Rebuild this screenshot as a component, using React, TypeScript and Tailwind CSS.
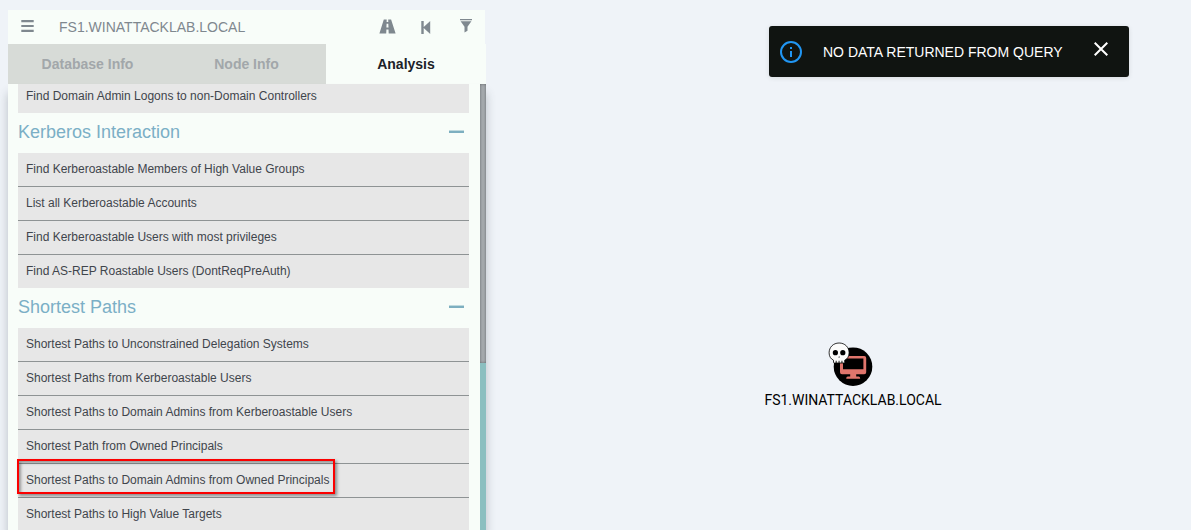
import React from "react";

const kerberos = [
  "Find Kerberoastable Members of High Value Groups",
  "List all Kerberoastable Accounts",
  "Find Kerberoastable Users with most privileges",
  "Find AS-REP Roastable Users (DontReqPreAuth)",
];

const shortest = [
  "Shortest Paths to Unconstrained Delegation Systems",
  "Shortest Paths from Kerberoastable Users",
  "Shortest Paths to Domain Admins from Kerberoastable Users",
  "Shortest Path from Owned Principals",
  "Shortest Paths to Domain Admins from Owned Principals",
  "Shortest Paths to High Value Targets",
];

const HIGHLIGHTED = "Shortest Paths to Domain Admins from Owned Principals";

function Section({ title, queries }: { title: string; queries: string[] }) {
  return (
    <section>
      <div className="flex h-10 items-start justify-between pr-[5px]">
        <h2 className="pt-[5px] text-[18px] leading-7 text-[#7bafc6]">{title}</h2>
        <span className="mt-[17px] h-[3px] w-[15px] border-t border-[#c0dade] bg-[#7dafc0]" />
      </div>
      <ul>
        {queries.map((q) => (
          <li
            key={q}
            className="relative h-[34px] border-b border-[#8e9394] bg-[#e7e7e7] pl-2 text-[12px] leading-[32px] text-[#3f454c] last:h-[34px] last:border-b-0"
          >
            {q}
            {q === HIGHLIGHTED && (
              <span className="absolute -top-[5px] -left-px h-[35px] w-[318px] border-2 border-[#fb0000] shadow-[2px_2px_3px_rgba(0,0,0,0.4),inset_2px_2px_3px_rgba(0,0,0,0.35)]" />
            )}
          </li>
        ))}
      </ul>
    </section>
  );
}

function Header() {
  return (
    <header className="flex h-[34px] w-[477px] shrink-0 items-center bg-[#f8fdf9] text-[#7f888f]">
      <svg className="-mt-[2px] ml-[13px] h-[12px] w-[13px]" viewBox="0 0 13 12" fill="currentColor">
        <path d="M0.3 0h12.4v2.2H0.3zM0.3 4.9h12.4v2.2H0.3zM0.3 9.8h12.4V12H0.3z" />
      </svg>
      <span className="ml-[25px] w-[320px] text-[14px] leading-5">FS1.WINATTACKLAB.LOCAL</span>
      <svg className="-mt-px h-[15px] w-[17px]" viewBox="0 0 17 15" fill="currentColor">
        <path d="M4.8 0.5H7.7L7.6 3H9.3L9.2 0.5H12.1L16.6 14.5H9.7L9.5 10.5H7.4L7.2 14.5H0.4ZM7.6 4.7L7.4 8.5H9.5L9.3 4.7Z" />
      </svg>
      <svg className="ml-[25px] h-[13px] w-[10px]" viewBox="0 0 10 13" fill="currentColor">
        <path d="M0.3 0H2.7V5.9L9.2 0V13L2.7 7V13H0.3Z" />
      </svg>
      <svg className="-mt-[2px] ml-[29px] h-[14px] w-[12px]" viewBox="0 0 12 14" fill="currentColor">
        <path d="M0 0H12V1.3H0ZM0.6 2.3H11.4L7.5 7.7V11.7L4.5 13.6V7.7Z" />
      </svg>
    </header>
  );
}

function Panel() {
  return (
    <aside className="flex h-full w-[478px] flex-col">
      <Header />
      <nav className="flex h-10 shrink-0 bg-[#f8fdf9] text-center text-[14px] leading-10 font-bold text-[#a2a7aa]">
        <div className="w-[159px] bg-[#d7dbd7]">Database Info</div>
        <div className="w-[159px] bg-[#d7dbd7]">Node Info</div>
        <div className="w-[160px] text-[#1c2228]">Analysis</div>
      </nav>
      <div className="flex min-h-0 flex-1 justify-between bg-[#f8fdf9] shadow-[0_9px_9px_rgba(60,70,80,0.3)]">
        <div className="w-[461px] overflow-hidden pl-[10px]">
          <div className="h-[29px] bg-[#e7e7e7] pl-2 text-[12px] leading-6 text-[#3f454c]">
            Find Domain Admin Logons to non-Domain Controllers
          </div>
          <div className="h-[175px] overflow-hidden">
            <Section title="Kerberos Interaction" queries={kerberos} />
          </div>
          <Section title="Shortest Paths" queries={shortest} />
        </div>
        <div className="flex w-[6px] flex-col">
          <div className="h-[279px] bg-[#a5aaae] shadow-[inset_0_0_3px_rgba(0,0,0,0.4)]" />
          <div className="flex-1 bg-[#8bbfc0]" />
        </div>
      </div>
    </aside>
  );
}

function Toast() {
  return (
    <div className="absolute top-[26px] left-[769px] flex h-[51px] w-[360px] items-center rounded-[3px] bg-[#101411] text-white shadow-[0_1px_5px_rgba(0,0,0,0.1)]">
      <svg className="ml-[11px] h-[22px] w-[22px]" viewBox="0 0 22 22" fill="none" stroke="#2196f3" strokeWidth="2">
        <circle cx="11" cy="11" r="10" />
        <path d="M11 10v6M11 6v2" />
      </svg>
      <span className="ml-[21px] w-[271px] text-[14px] leading-5 whitespace-nowrap">NO DATA RETURNED FROM QUERY</span>
      <svg className="-mt-[6px] h-[14px] w-[14px]" viewBox="0 0 14 14" fill="none" stroke="white" strokeWidth="2">
        <path d="M0.7 0.7l12.6 12.6M13.3 0.7L0.7 13.3" />
      </svg>
    </div>
  );
}

function ComputerNode() {
  return (
    <div className="absolute top-[342px] left-[753px] flex w-[200px] flex-col items-center">
      <svg className="h-[46px] w-[50px]" viewBox="0 0 50 46">
        <circle cx="25" cy="24.7" r="19.3" fill="#000" />
        <path
          fill="#e0756c"
          fillRule="evenodd"
          d="M14 13.9H36.2Q38.2 13.9 38.2 15.9V30.2Q38.2 32.2 36.2 32.2H28.2V34.6H30.6Q32.2 34.6 32.2 36.7H18.2Q18.2 34.6 19.8 34.6H22.2V32.2H14Q12 32.2 12 30.2V15.9Q12 13.9 14 13.9ZM15 16.5V27.3H35.4V16.5Z"
        />
        <path
          fill="#fcfcfb"
          stroke="#000"
          strokeWidth="0.8"
          d="M11.1 1C5.2 1 1.1 5.3 1.1 10.8C1.1 14.4 2.8 17 5.5 18.2V20.4Q5.5 21 6.2 21H16Q16.7 21 16.7 20.4V18.2C19.4 17 21.1 14.4 21.1 10.8C21.1 5.3 17 1 11.1 1Z"
        />
        <circle cx="7.4" cy="10.7" r="2.6" />
        <circle cx="14.8" cy="10.7" r="2.6" />
        <path d="M11.1 14l-0.7 1.5h1.4zM7.7 18.8h0.9v2.2h-0.9zM10.6 18.8h0.9v2.2h-0.9zM13.5 18.8h0.9v2.2h-0.9z" />
      </svg>
      <span className="mt-[2px] font-['Roboto',sans-serif] text-[14px] leading-5 text-black">
        FS1.WINATTACKLAB.LOCAL
      </span>
    </div>
  );
}

export default function App() {
  return (
    <main className="relative h-[530px] w-[1191px] overflow-hidden bg-[#eff3f8] pt-[10px] pl-2 font-['Liberation_Sans',Arial,sans-serif]">
      <Panel />
      <Toast />
      <ComputerNode />
    </main>
  );
}
